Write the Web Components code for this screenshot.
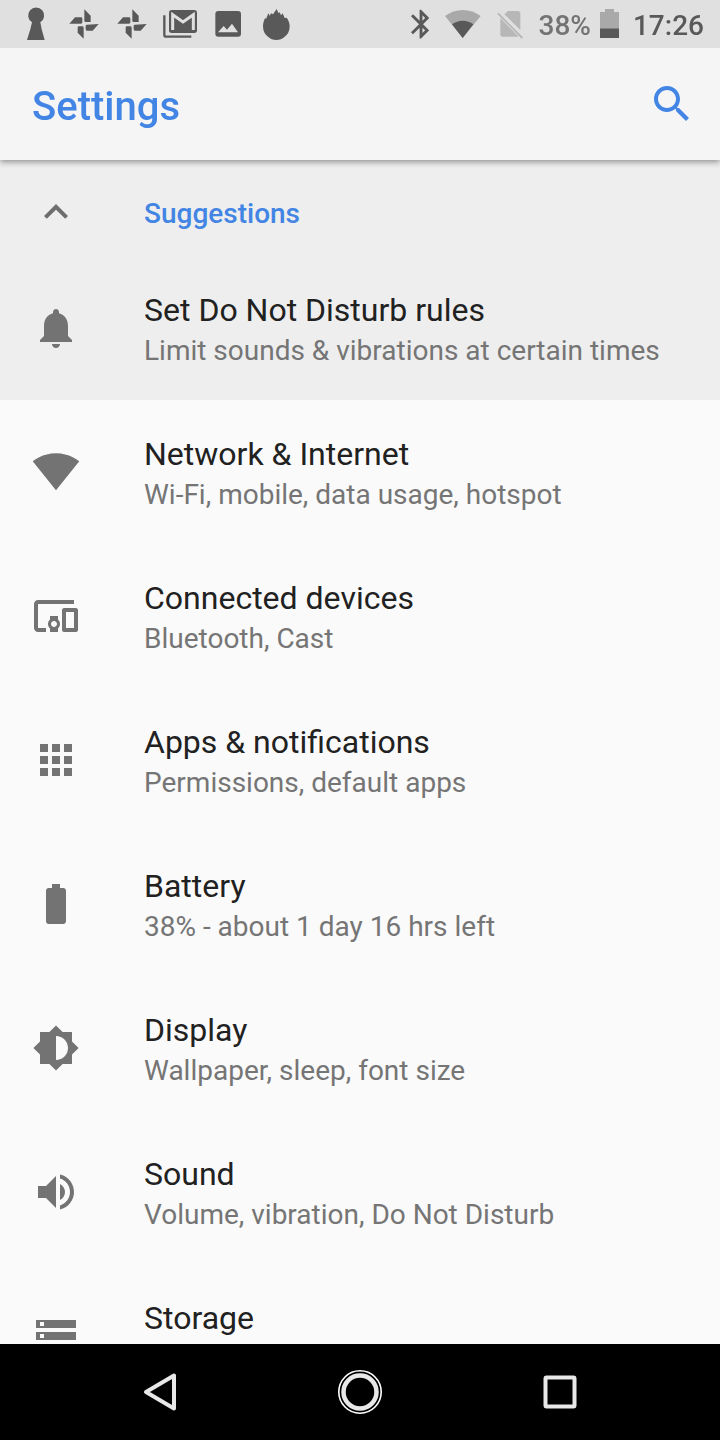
<!DOCTYPE html>
<html lang="en">
<head>
<meta charset="utf-8">
<meta name="viewport" content="width=device-width, initial-scale=1">
<title>Settings</title>
<style>
  html, body { margin: 0; height: 100%; }
  body { font-family: Roboto, sans-serif; background: #fafafa; color: #212121; }
</style>
</head>
<body>
<settings-screen></settings-screen>

<script>
const define = (name, html) => {
  const template = document.createElement('template');
  template.innerHTML = html;
  customElements.define(name, class extends HTMLElement {
    constructor() {
      super();
      this.attachShadow({ mode: 'open' }).append(template.content.cloneNode(true));
    }
  });
};

/* Each icon: [width, height, viewBox, drawing] */
const pinwheel = '<path d="M73 28L92 47V66H77Q73 66 73 62zM116 72L98 92H81Q77 92 77 88V78Q77 74 81 74zM71 116L53 98V83Q53 79 57 79H67Q71 79 71 83zM28 71L45 52H63Q67 52 67 56V67Q67 71 63 71z"/>';
const icons = {
  search: [48, 48, '0 0 24 24', '<path d="M15.5 14h-.79l-.28-.27C15.41 12.59 16 11.11 16 9.5 16 5.91 13.09 3 9.5 3S3 5.91 3 9.5 5.91 16 9.5 16c1.61 0 3.09-.59 4.23-1.57l.27.28v.79l5 4.99L20.49 19l-4.99-5zm-6 0C7.01 14 5 11.99 5 9.5S7.01 5 9.5 5 14 7.01 14 9.5 11.99 14 9.5 14z"/>'],
  collapse: [48, 48, '0 0 24 24', '<path d="M12 8l-6 6 1.41 1.41L12 10.83l4.59 4.58L18 14z"/>'],
  bell: [48, 48, '0 0 24 24', '<path d="M12 22c1.1 0 2-.9 2-2h-4c0 1.1.89 2 2 2zm6-6v-5c0-3.07-1.64-5.64-4.5-6.32V4c0-.83-.67-1.5-1.5-1.5s-1.5.67-1.5 1.5v.68C7.63 5.36 6 7.92 6 11v5l-2 2v1h16v-1l-2-2z"/>'],
  network: [48, 48, '0 .4 24 24', '<path d="M12.01 21.49L23.64 7c-.45-.34-4.93-4-11.64-4C5.28 3 .81 6.66.36 7l11.63 14.49.01.01z"/>'],
  devices: [48, 48, '0 0 24 24', '<path d="M3 6h18V4H3c-1.1 0-2 .9-2 2v12c0 1.1.9 2 2 2h4v-2H3V6zm10 6H9v1.78c-.61.55-1 1.33-1 2.22s.39 1.67 1 2.22V20h4v-1.78c.61-.55 1-1.34 1-2.22s-.39-1.67-1-2.22V12zm-2 5.5c-.83 0-1.5-.67-1.5-1.5s.67-1.5 1.5-1.5 1.5.67 1.5 1.5-.67 1.5-1.5 1.5zM22 8h-6c-.5 0-1 .5-1 1v10c0 .5.5 1 1 1h6c.5 0 1-.5 1-1V9c0-.5-.5-1-1-1zm-1 10h-4v-8h4v8z"/>'],
  apps: [48, 48, '0 0 24 24', '<path d="M4 8h4V4H4v4zm6 12h4v-4h-4v4zm-6 0h4v-4H4v4zm0-6h4v-4H4v4zm6 0h4v-4h-4v4zm6-10v4h4V4h-4zm-6 4h4V4h-4v4zm6 6h4v-4h-4v4zm0 6h4v-4h-4v4z"/>'],
  battery: [48, 48, '0 0 24 24', '<path d="M15.67 4H14V2h-4v2H8.33C7.6 4 7 4.6 7 5.33v15.33C7 21.4 7.6 22 8.33 22h7.33c.74 0 1.34-.6 1.34-1.33V5.33C17 4.6 16.4 4 15.67 4z"/>'],
  display: [48, 48, '0 0 24 24', '<path d="M20 15.31L23.31 12 20 8.69V4h-4.69L12 .69 8.69 4H4v4.69L.69 12 4 15.31V20h4.69L12 23.31 15.31 20H20v-4.69zM12 18V6c3.31 0 6 2.69 6 6s-2.69 6-6 6z"/>'],
  sound: [48, 48, '0 0 24 24', '<path d="M3 9v6h4l5 5V4L7 9H3zm13.5 3c0-1.77-1.02-3.29-2.5-4.03v8.05c1.48-.73 2.5-2.25 2.5-4.02zM14 3.23v2.06c2.89.86 5 3.54 5 6.71s-2.11 5.85-5 6.71v2.06c4.01-.91 7-4.49 7-8.77s-2.99-7.86-7-8.77z"/>'],
  storage: [48, 48, '0 0 24 24', '<path d="M2 20h20v-4H2v4zm2-3h2v2H4v-2zM2 4v4h20V4H2zm4 3H4V5h2v2zm-4 7h20v-4H2v4zm2-3h2v2H4v-2z"/>'],

  keyhole: [48, 48, '0 0 144 144', '<path d="M60 67A24 24 0 1 1 85 67L89 88L98 120H45L55 88z"/>'],
  pinwheel: [48, 48, '0 0 144 144', pinwheel],
  mail: [48, 48, '0 0 144 144', '<path d="M25 46V105Q25 110 30 110H106" fill="none" stroke="currentColor" stroke-width="7"/><rect x="39" y="30" width="84" height="69" rx="8"/><path d="M50 90V44L81 66L112 44V90" fill="none" stroke="#e0e0e0" stroke-width="9"/>'],
  image: [48, 48, '0 0 144 144', '<rect x="34" y="33" width="77" height="77" rx="9"/><path d="M42 97L59 78L69 89L84 71L102 97z" fill="#e0e0e0"/>'],
  flame: [48, 48, '0 0 144 144', '<path d="M33 80C33 68 36 60 40 53L42 58L49 40L53 47L57 40L63 43L74 27L79 39L83 37L87 46L92 40L98 54L104 53C110 61 113 69 113 80A40 40 0 0 1 97 111Q88 120 73 120Q58 120 49 111A40 40 0 0 1 33 80z"/>'],

  bluetooth: [18, 48, '34 0 54 144', '<path transform="translate(12.5 21) scale(4.3)" d="M17.71 7.71L12 2h-1v7.59L6.41 5 5 6.41 10.59 12 5 17.59 6.41 19 11 14.41V22h1l5.71-5.71-4.3-4.29 4.3-4.29zM13 5.83l1.88 1.88L13 9.59V5.83zm1.88 10.46L13 18.17v-3.76l1.88 1.88z"/>'],
  signal: [36, 48, '134 0 108 144', '<path d="M187 114L134 48Q158 30 187 30Q217 30 241 48z" fill="#a9a9a9"/><path d="M187 114L155 73Q170 62 187 62Q205 62 219 73z"/>'],
  nosim: [26, 48, '290 0 78 144', '<g fill="#b7b7b7"><path d="M312 43L323 33H352Q360 33 360 41V90zM300 54L355 110H308Q300 110 300 102z"/><path d="M291 42L295 38L368 112L364 116z"/></g>'],
  charge: [19, 48, '600 0 57 144', '<path d="M600 36H615V27H642V36H657V85H600z" fill="#a9a9a9"/><path d="M600 85H657V114H600z"/>'],

  back: [48, 48, '0 0 48 48', '<path d="M38 7.500V40.500L10 24z" fill="none" stroke="currentColor" stroke-width="4" stroke-linejoin="round"/>'],
  home: [48, 48, '0 0 48 48', '<circle cx="24" cy="24" r="21.200" fill="none" stroke="#fff" stroke-width="1.600"/><circle cx="24" cy="24" r="16.500" fill="none" stroke="currentColor" stroke-width="4.500"/>'],
  recents: [48, 48, '0 0 48 48', '<rect x="9.500" y="9.500" width="29" height="29" rx="1" fill="none" stroke="currentColor" stroke-width="4"/>']
};

customElements.define('ui-icon', class extends HTMLElement {
  constructor() {
    super();
    this.attachShadow({ mode: 'open' });
  }
  connectedCallback() {
    const [w, h, box, art] = icons[this.getAttribute('name')];
    this.shadowRoot.innerHTML = `
      <style>:host { display: block; flex: none; } svg { display: block; fill: currentColor; }</style>
      <svg width="${w}" height="${h}" viewBox="${box}" aria-hidden="true">${art}</svg>`;
  }
});

define('status-bar', `
  <style>
    :host { display: flex; justify-content: space-between; height: 48px; padding: 0 16px 0 12px;
            position: relative; z-index: 2; background: #e0e0e0; color: #595959;
            font-size: 28px; line-height: 52px; font-weight: 500; }
    div { display: flex; }
    .system { gap: 14px; }
    .radios { gap: 16px; }
    .power { gap: 9px; }
    .level { color: #737373; }
  </style>
  <div>
    <ui-icon name="keyhole"></ui-icon><ui-icon name="pinwheel"></ui-icon><ui-icon name="pinwheel"></ui-icon>
    <ui-icon name="mail"></ui-icon><ui-icon name="image"></ui-icon><ui-icon name="flame"></ui-icon>
  </div>
  <div class="system">
    <div class="radios">
      <ui-icon name="bluetooth"></ui-icon><ui-icon name="signal"></ui-icon><ui-icon name="nosim"></ui-icon>
      <div class="power"><span class="level">38%</span><ui-icon name="charge"></ui-icon></div>
    </div>
    <time>17:26</time>
  </div>`);

define('app-bar', `
  <style>
    :host { display: flex; align-items: center; justify-content: space-between; height: 112px;
            padding: 0 24px 0 32px; box-sizing: border-box; background: #f5f5f5; color: #4285e4;
            position: relative; z-index: 1; box-shadow: 0 2px 6px rgba(0, 0, 0, .4); }
    h1 { margin: 0; padding-top: 6px; font-size: 40px; line-height: 48px; font-weight: 500; }
    button { display: block; padding: 0; border: 0; background: none; color: inherit; }
  </style>
  <h1><slot></slot></h1>
  <button type="button" aria-label="Search settings"><ui-icon name="search"></ui-icon></button>`);

define('suggestion-group', `
  <style>
    :host { display: block; background: #eee; }
    h2 { margin: 0; font-size: 28px; }
    button { display: flex; align-items: center; gap: 64px; width: 100%; height: 96px; padding: 8px 32px 0;
             border: 0; background: none; color: #4285e4; font: inherit; font-weight: 500; line-height: 32px;
             text-align: left; box-sizing: border-box; }
    span { padding-top: 4px; }
    ui-icon { color: #6e6e6e; }
  </style>
  <h2><button type="button" aria-expanded="true"><ui-icon name="collapse"></ui-icon><span><slot name="heading"></slot></span></button></h2>
  <slot></slot>`);

customElements.define('settings-item', class extends HTMLElement {
  constructor() {
    super();
    this.attachShadow({ mode: 'open' }).innerHTML = `
      <style>
        :host { display: block; }
        a { display: flex; align-items: flex-start; gap: 64px; min-height: 144px; padding: 36px 32px 24px;
            box-sizing: border-box; color: #212121; text-decoration: none; }
        ui-icon { padding-top: 12px; color: #737373; }
        .title { font-size: 32px; line-height: 36px; }
        .summary { margin-top: 4px; font-size: 28px; line-height: 38px; color: #757575; }
      </style>
      <a href="#${this.getAttribute('icon')}">
        <ui-icon name="${this.getAttribute('icon')}"></ui-icon>
        <div><div class="title"><slot></slot></div><div class="summary"><slot name="summary"></slot></div></div>
      </a>`;
  }
});

define('navigation-bar', `
  <style>
    :host { display: block; background: #000; color: #e8e8e8; }
    nav { display: flex; height: 96px; padding: 0 60px; }
    button { flex: 1; display: flex; align-items: center; justify-content: center; padding: 0; border: 0;
             background: none; color: inherit; }
  </style>
  <nav aria-label="System navigation">
    <button type="button" aria-label="Back"><ui-icon name="back"></ui-icon></button>
    <button type="button" aria-label="Home"><ui-icon name="home"></ui-icon></button>
    <button type="button" aria-label="Recent apps"><ui-icon name="recents"></ui-icon></button>
  </nav>`);

define('settings-screen', `
  <style>
    :host { display: flex; flex-direction: column; height: 100vh; }
    status-bar, app-bar, navigation-bar { flex: none; }
    main { flex: 1; min-height: 0; overflow-y: auto; scrollbar-width: none; background: #fafafa; }
  </style>
  <status-bar></status-bar>
  <app-bar>Settings</app-bar>
  <main>
    <suggestion-group>
      <span slot="heading">Suggestions</span>
      <settings-item icon="bell">Set Do Not Disturb rules<span slot="summary">Limit sounds &amp; vibrations at certain times</span></settings-item>
    </suggestion-group>
    <settings-item icon="network">Network &amp; Internet<span slot="summary">Wi-Fi, mobile, data usage, hotspot</span></settings-item>
    <settings-item icon="devices">Connected devices<span slot="summary">Bluetooth, Cast</span></settings-item>
    <settings-item icon="apps">Apps &amp; notifications<span slot="summary">Permissions, default apps</span></settings-item>
    <settings-item icon="battery">Battery<span slot="summary">38% - about 1 day 16 hrs left</span></settings-item>
    <settings-item icon="display">Display<span slot="summary">Wallpaper, sleep, font size</span></settings-item>
    <settings-item icon="sound">Sound<span slot="summary">Volume, vibration, Do Not Disturb</span></settings-item>
    <settings-item icon="storage">Storage</settings-item>
  </main>
  <navigation-bar></navigation-bar>`);
</script>
</body>
</html>
